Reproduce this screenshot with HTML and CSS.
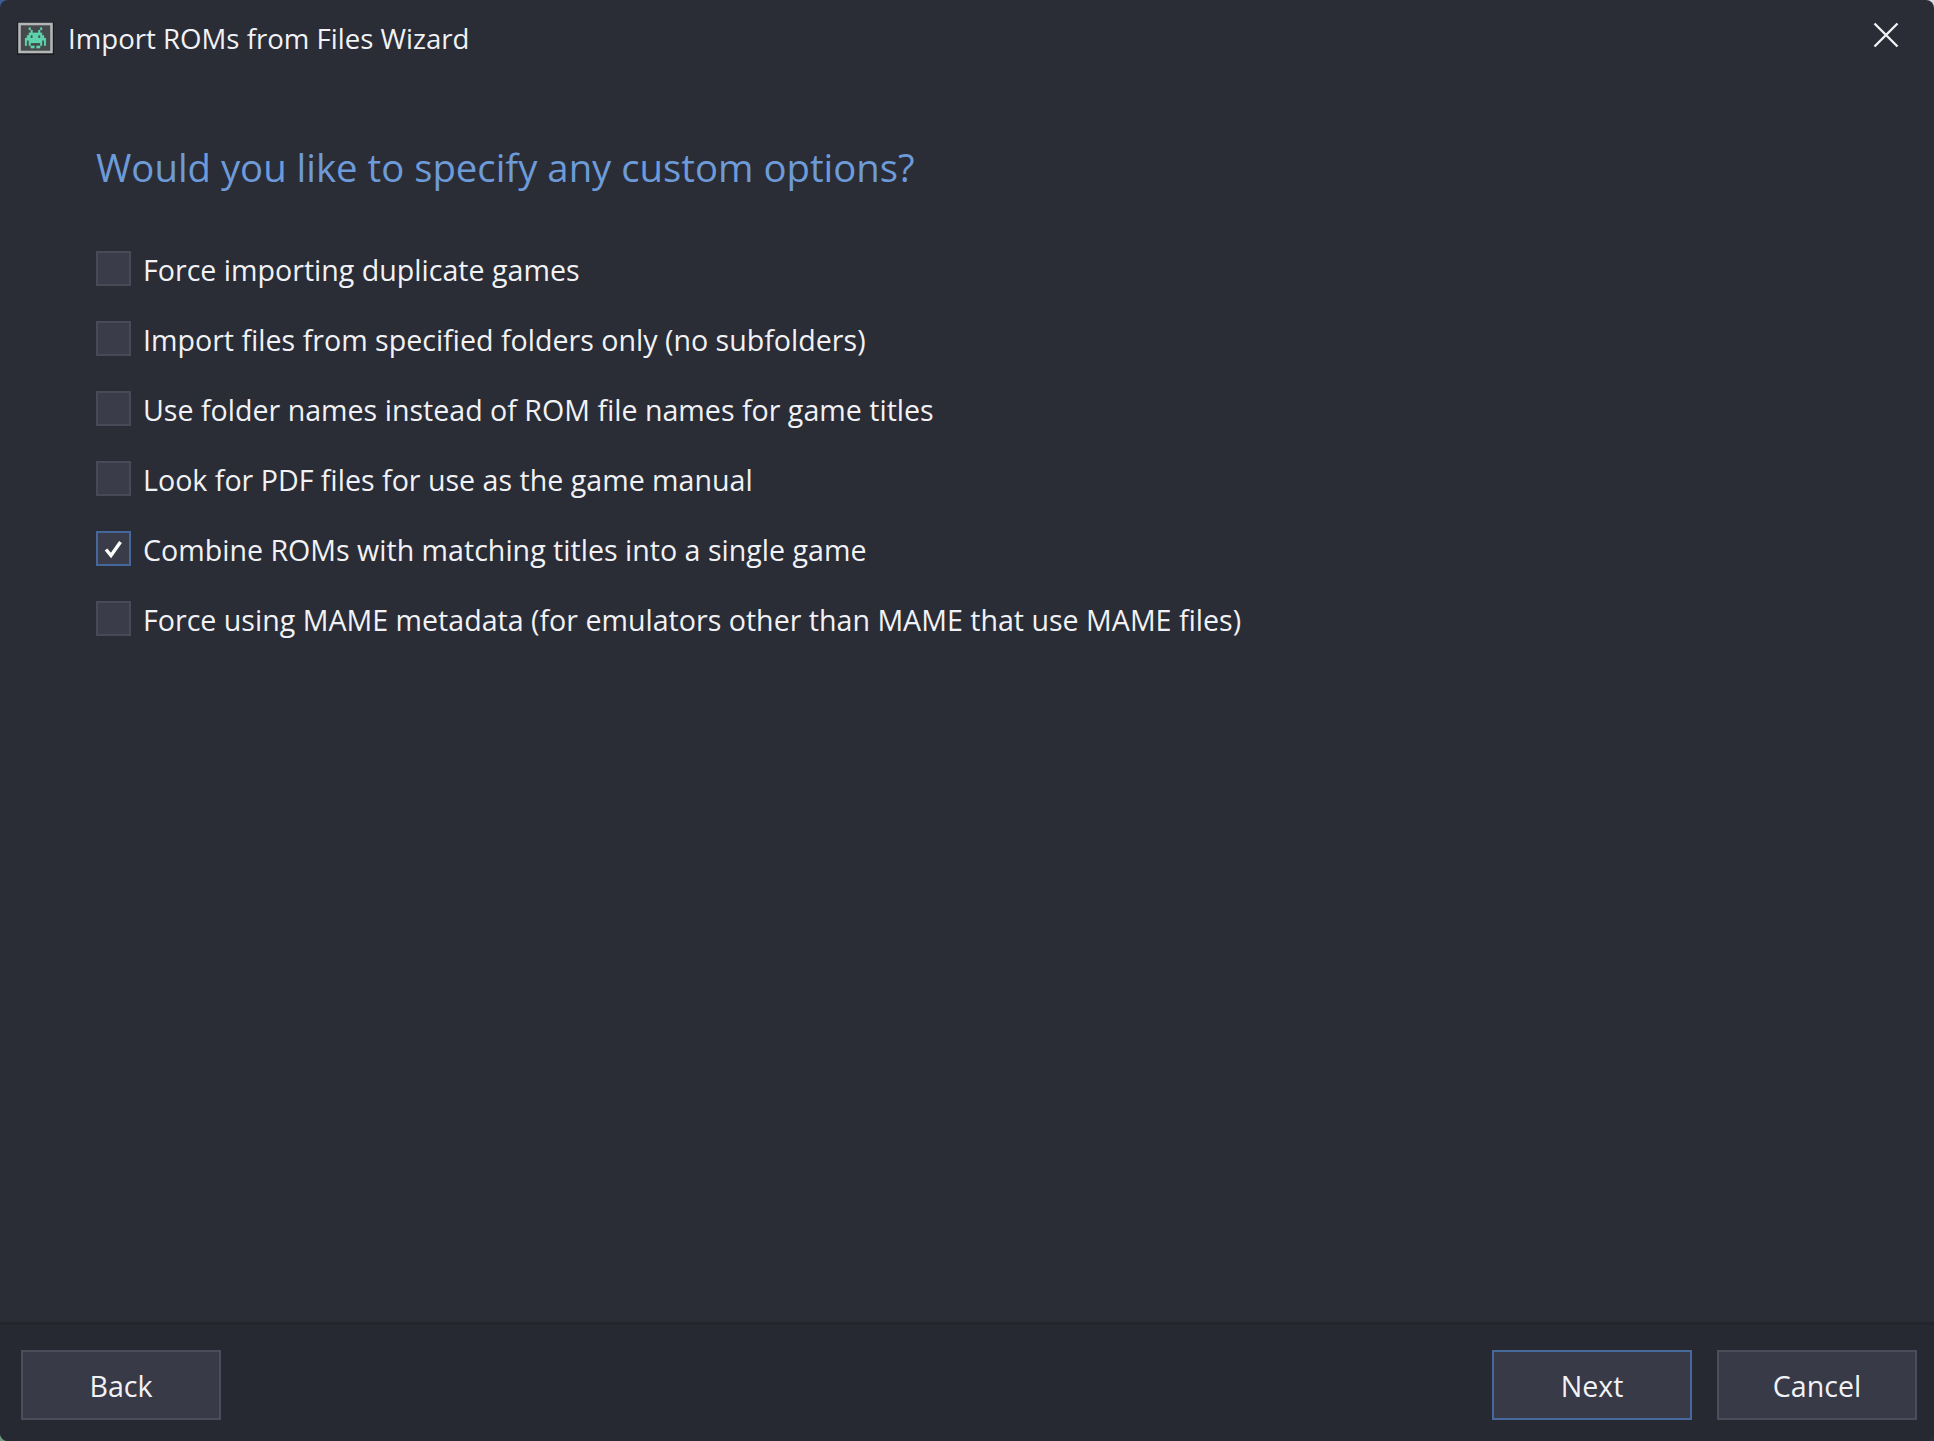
FILE: index.html
```html
<!DOCTYPE html>
<html lang="en">
<head>
<meta charset="utf-8">
<title>Import ROMs from Files Wizard</title>
<link rel="stylesheet" href="styles.css">
</head>
<body>
<div class="window">
  <header class="titlebar">
    <svg class="app-icon" viewBox="0 0 37 33" aria-hidden="true">
      <rect x="0" y="0" width="37" height="33" fill="#1a1b20"/>
      <rect x="2.500" y="2" width="32" height="28" fill="#45494c" stroke="#b4b6b6" stroke-width="2.600"/>
      <g transform="translate(8 5.500) scale(1.900 2.600)">
        <path fill="#5ed3ac" stroke="#5ed3ac" stroke-width="0.080" d="M2 0h1v1H2zM8 0h1v1H8zM3 1h1v1H3zM7 1h1v1H7zM2 2h7v1H2zM1 3h2v1H1zM4 3h3v1H4zM8 3h2v1H8zM0 4h11v1H0zM0 5h1v1H0zM2 5h7v1H2zM10 5h1v1h-1zM0 6h1v1H0zM2 6h1v1H2zM8 6h1v1H8zM10 6h1v1h-1zM3 7h2v1H3zM6 7h2v1H6z"/>
      </g>
    </svg>
    <span class="title">Import ROMs from Files Wizard</span>
    <button class="close" aria-label="Close">
      <svg viewBox="0 0 26 26" aria-hidden="true"><path d="M1.500 1.500l23 23M24.500 1.500l-23 23" stroke="#f2f2f4" stroke-width="2.400" fill="none"/></svg>
    </button>
  </header>
  <main class="content">
    <h1 class="heading">Would you like to specify any custom options?</h1>
    <ul class="options">
      <li class="option"><span class="box"></span><span class="label">Force importing duplicate games</span></li>
      <li class="option"><span class="box"></span><span class="label">Import files from specified folders only (no subfolders)</span></li>
      <li class="option"><span class="box"></span><span class="label">Use folder names instead of ROM file names for game titles</span></li>
      <li class="option"><span class="box"></span><span class="label">Look for PDF files for use as the game manual</span></li>
      <li class="option"><span class="box checked"><svg viewBox="0 0 31 31" aria-hidden="true"><path d="M8 16.500l5 6 9.500-13.500" stroke="#fff" stroke-width="3.400" fill="none"/></svg></span><span class="label">Combine ROMs with matching titles into a single game</span></li>
      <li class="option"><span class="box"></span><span class="label">Force using MAME metadata (for emulators other than MAME that use MAME files)</span></li>
    </ul>
  </main>
  <footer class="footer">
    <button class="btn">Back</button>
    <div class="spacer"></div>
    <button class="btn primary">Next</button>
    <button class="btn">Cancel</button>
  </footer>
</div>
</body>
</html>
```

FILE: styles.css
```css
* { box-sizing: border-box; }
html, body { margin: 0; height: 100%; }
body {
  font-family: "Open Sans", "Noto Sans", "Liberation Sans", sans-serif;
  color: #f1f2f5;
  overflow: hidden;
  background: conic-gradient(#dcdde0 0 25%, #2a2c36 25% 50%, #6d9a80 50% 75%, #3f5d94 75% 100%);
}
.window { height: 1441px; display: flex; flex-direction: column; background: #2a2c36; border-radius: 8px; overflow: hidden; }
.titlebar { display: flex; align-items: center; height: 76px; padding: 0 23px 0 17px; flex: none; }
.app-icon { width: 37px; height: 33px; flex: none; }
.title { margin-left: 14px; font-size: 27.600px; flex: 1; }
.close { width: 30px; height: 30px; padding: 2px; background: none; border: 0; flex: none; margin-top: -6px; margin-right: 10px; }
.close svg { display: block; width: 26px; height: 26px; }
.content { flex: 1; padding: 66px 0 0 96px; }
.heading { margin: 0 0 59px; font-size: 38.300px; font-weight: 400; color: #6d9bd8; line-height: 50px; }
.options { list-style: none; margin: 0; padding: 0; display: flex; flex-direction: column; gap: 35px; }
.option { display: flex; align-items: center; gap: 12px; height: 35px; font-size: 28.600px; }
.label { padding-top: 2px; }
.box { width: 35px; height: 35px; flex: none; background: #3a3c49; border: 2px solid #484a57; }
.box svg { display: block; width: 100%; height: 100%; }
.box.checked { border-color: #44689c; }
.footer { flex: none; height: 119px; display: flex; align-items: flex-start; gap: 25px; padding: 25px 17px 0 21px; background: #272932; border-top: 3px solid #23252d; }
.spacer { flex: 1; }
.btn { width: 200px; height: 70px; background: #383a47; border: 2px solid #4b4d5a; color: #f1f2f5; font: inherit; font-size: 28.600px; padding: 0; }
.btn.primary { border-color: #47699b; }
```
